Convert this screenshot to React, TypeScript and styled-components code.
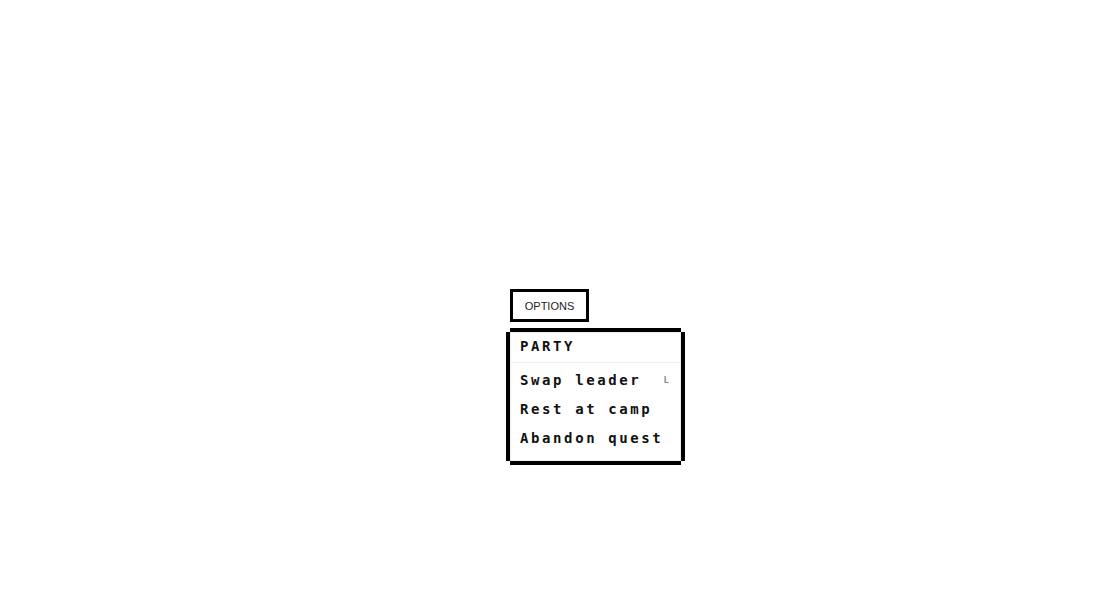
import React from "react";
import styled, { createGlobalStyle } from "styled-components";

const GlobalStyle = createGlobalStyle`
  html, body {
    margin: 0;
    padding: 0;
    background: #ffffff;
  }
`;

const Page = styled.div({
  display: "flex",
  flexDirection: "column",
  alignItems: "flex-start",
  gap: "11px",
  padding: "289px 0 0 510px",
  minHeight: "611px",
  boxSizing: "border-box",
});

const OptionsButton = styled.button({
  boxSizing: "border-box",
  width: "79px",
  height: "33px",
  border: "3px solid #000",
  background: "#fff",
  padding: 0,
  fontFamily: '"Liberation Sans", Arial, sans-serif',
  fontSize: "11px",
  color: "#222",
  cursor: "pointer",
});

const Menu = styled.div({
  boxSizing: "border-box",
  width: "171px",
  marginTop: "-1px",
  background: "#fff",
  border: "1px solid #ececec",
  boxShadow: "0 -4px 0 0 #000, 0 4px 0 0 #000, -4px 0 0 0 #000, 4px 0 0 0 #000",
  fontFamily: '"DejaVu Sans Mono", "Liberation Mono", monospace',
  fontWeight: 700,
  fontSize: "14px",
  letterSpacing: "2.6px",
  color: "#111",
  paddingBottom: "8px",
});

const Header = styled.div({
  padding: "7px 9px 10px",
  lineHeight: "12px",
  borderBottom: "1px solid #eeeeee",
});

const List = styled.div({
  paddingTop: "2px",
});

const Item = styled.div({
  display: "flex",
  alignItems: "center",
  justifyContent: "space-between",
  height: "29px",
  padding: "0 9px",
  whiteSpace: "nowrap",
  cursor: "pointer",
});

const Shortcut = styled.span({
  fontSize: "9px",
  letterSpacing: 0,
  color: "#888",
  marginRight: "2px",
});

const items: { label: string; key?: string }[] = [
  { label: "Swap leader", key: "L" },
  { label: "Rest at camp" },
  { label: "Abandon quest" },
];

export default function App() {
  return (
    <>
      <GlobalStyle />
      <Page>
        <OptionsButton>OPTIONS</OptionsButton>
        <Menu>
          <Header>PARTY</Header>
          <List>
            {items.map((it) => (
              <Item key={it.label}>
                <span>{it.label}</span>
                {it.key && <Shortcut>{it.key}</Shortcut>}
              </Item>
            ))}
          </List>
        </Menu>
      </Page>
    </>
  );
}
